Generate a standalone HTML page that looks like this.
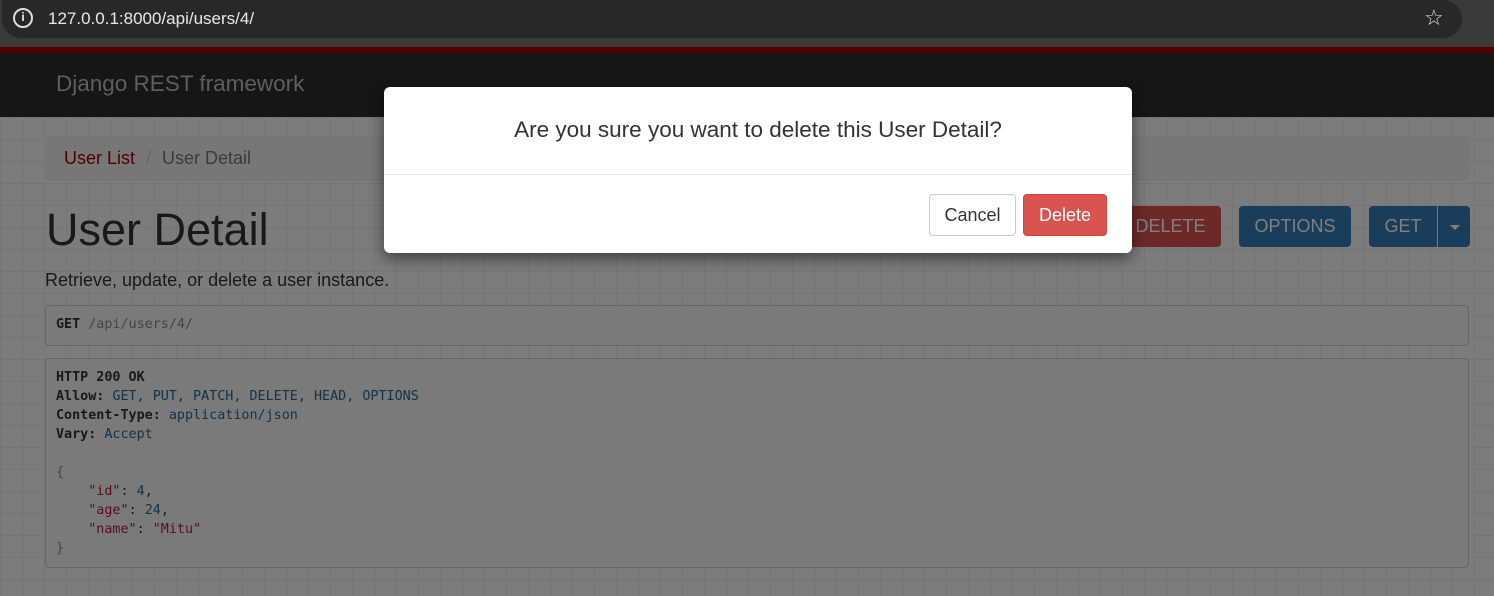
<!DOCTYPE html>
<html><head><style>
*{box-sizing:border-box;margin:0;padding:0}
body{width:1494px;height:596px;overflow:hidden;font-family:"Liberation Sans",sans-serif;background:#f8f8f8;position:relative}
.top{position:absolute;left:0;top:0;width:1494px;height:47px;background:#3a3a3a;z-index:5}
.pill{position:absolute;left:2px;top:0;width:1460px;height:38px;background:#282828;border-radius:0 19px 19px 19px}
.url{position:absolute;left:48px;top:9px;color:#e8e8e8;font-size:17px}
.info{position:absolute;left:13px;top:8px;width:20px;height:20px;border-radius:50%;border:2px solid #ddd}
.info:after{content:"i";position:absolute;left:0;top:0;width:16px;text-align:center;color:#eee;font-size:12px;font-weight:bold}
.red{position:absolute;left:0;top:47px;width:1494px;height:6px;background:#ac0000}
.nav{position:absolute;left:0;top:53px;width:1494px;height:64px;background:#2c2c2c}
.brand{position:absolute;left:56px;top:71px;color:#bcbcbc;font-size:22.5px}
.grid{position:absolute;left:0;top:117px;width:1494px;height:479px;background-image:linear-gradient(#eaeaea 1px,transparent 1px),linear-gradient(90deg,#eaeaea 1px,transparent 1px);background-size:22px 22px}
.bc{position:absolute;left:45px;top:136px;width:1424px;height:45px;background:#eeeeee;border-radius:4px;font-size:18px;padding:12px 19px;color:#777}
.bc a{color:#a30000}
.bc .s{color:#ccc;margin:0 11px}
h1{position:absolute;left:46px;top:204px;font-size:45px;font-weight:normal;color:#333}
.desc{position:absolute;left:45px;top:270px;font-size:18px;color:#333}
.btn{position:absolute;top:206px;height:41px;border-radius:4px;color:#fff;font-size:18px;text-align:center;line-height:41px}
pre{position:absolute;left:45px;width:1424px;background:#f5f5f5;border:1px solid #ccc;border-radius:4px;font-family:"DejaVu Sans Mono","Liberation Mono",monospace;font-size:13.4px;line-height:19px;color:#333;padding:9px 10px}
.b{color:#2a6496}.r{color:#b11e3e}.g{color:#888}
.ov{position:absolute;left:0;top:47px;width:1494px;height:549px;background:rgba(0,0,0,.5)}
.modal{position:absolute;left:384px;top:87px;width:748px;height:166px;background:#fff;border-radius:6px;box-shadow:0 5px 15px rgba(0,0,0,.5)}
.mh{height:88px;border-bottom:1px solid #e5e5e5;text-align:center;font-size:22.5px;color:#333;padding-top:30px}
.mb{position:absolute;top:107px;height:42px;border-radius:4px;font-size:18px;text-align:center;line-height:40px}
</style></head><body>
<div class="top"><div class="pill"></div><div class="info"></div><div class="url">127.0.0.1:8000/api/users/4/</div>
<div style="position:absolute;left:1424px;top:5px;color:#ddd;font-size:22px">☆</div></div>
<div class="red"></div><div class="nav"></div><div class="brand">Django REST framework</div>
<div class="grid"></div>
<div class="bc"><a>User List</a><span class="s">/</span>User Detail</div>
<h1>User Detail</h1>
<div class="desc">Retrieve, update, or delete a user instance.</div>
<div class="btn" style="left:1120px;width:101px;background:#d9534f">DELETE</div>
<div class="btn" style="left:1239px;width:112px;background:#337ab7">OPTIONS</div>
<div class="btn" style="left:1369px;width:68px;background:#337ab7;border-radius:4px 0 0 4px">GET</div>
<div class="btn" style="left:1438px;width:32px;background:#337ab7;border-radius:0 4px 4px 0;border-left:1px solid #2e6da4"><span style="display:inline-block;border-top:5px solid #fff;border-left:5px solid transparent;border-right:5px solid transparent;vertical-align:middle"></span></div>
<pre style="top:305px;height:41px"><b>GET</b> <span class="g">/api/users/4/</span></pre>
<pre style="top:358px;height:210px"><b>HTTP 200 OK</b>
<b>Allow:</b> <span class="b">GET, PUT, PATCH, DELETE, HEAD, OPTIONS</span>
<b>Content-Type:</b> <span class="b">application/json</span>
<b>Vary:</b> <span class="b">Accept</span>

<span class="g">{</span>
    <span class="r">"id"</span>: <span class="b">4</span>,
    <span class="r">"age"</span>: <span class="b">24</span>,
    <span class="r">"name"</span>: <span class="r">"Mitu"</span>
<span class="g">}</span></pre>
<div class="ov"></div>
<div class="modal"><div class="mh">Are you sure you want to delete this User Detail?</div>
<div class="mb" style="left:545px;width:87px;border:1px solid #ccc;color:#333">Cancel</div>
<div class="mb" style="left:639px;width:84px;background:#d9534f;border:1px solid #d43f3a;color:#fff">Delete</div>
</div>
</body></html>
